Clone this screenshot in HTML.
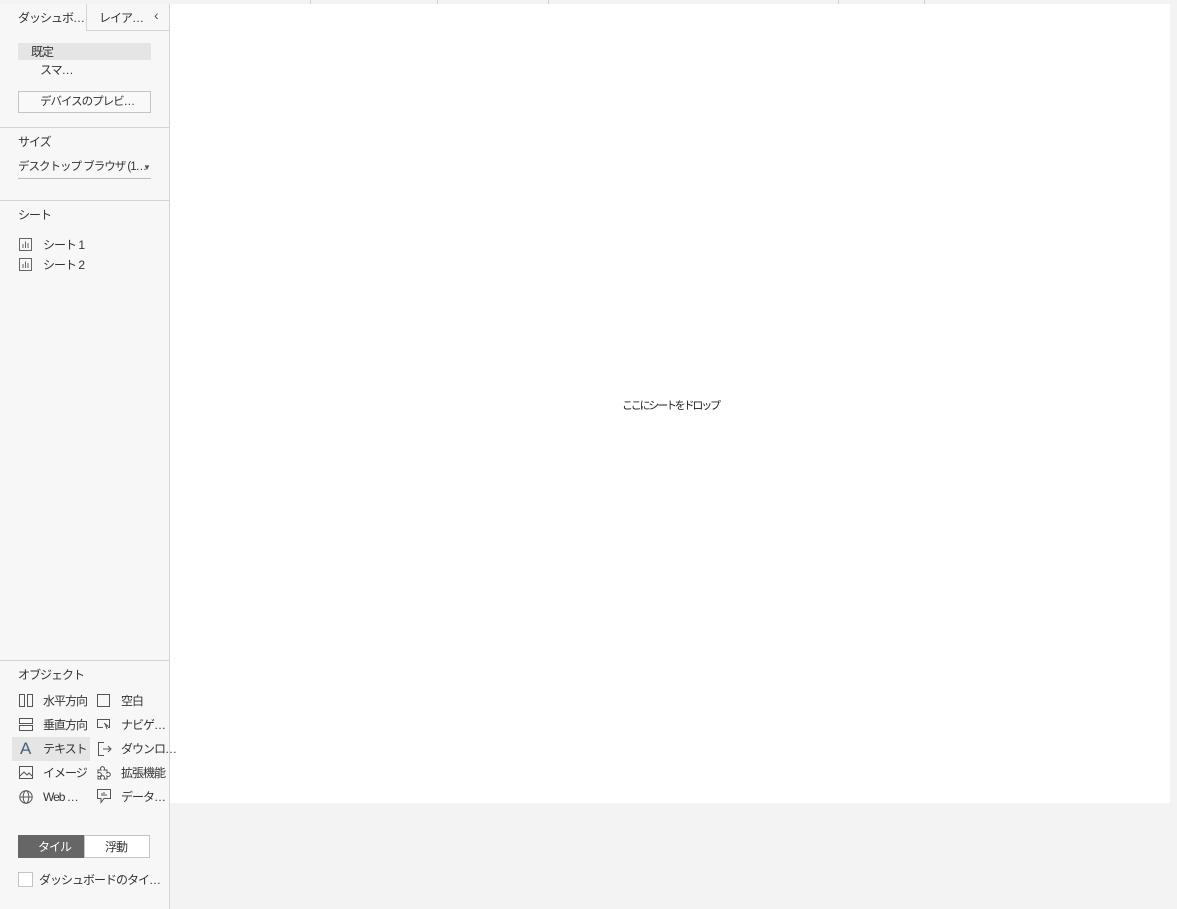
<!DOCTYPE html>
<html><head><meta charset="utf-8"><style>
*{margin:0;padding:0;box-sizing:border-box}
body{width:1177px;height:909px;background:#f3f3f3;font-family:"Liberation Sans","Noto Sans CJK JP",sans-serif;font-size:12px;color:#333;position:relative;overflow:hidden}
.a{position:absolute}
#side{left:0;top:4px;width:170px;height:905px;background:#f7f7f7;border-right:1px solid #d4d4d4}
.t{position:absolute;white-space:nowrap;letter-spacing:-1px;line-height:14px}
.hr{position:absolute;left:0;width:169px;height:1px;background:#d4d4d4}
.tick{position:absolute;top:0;width:1px;height:4px;background:#d0d0d0}
svg{position:absolute}
</style></head><body>
<div class="tick" style="left:310px"></div><div class="tick" style="left:437px"></div><div class="tick" style="left:548px"></div><div class="tick" style="left:838px"></div><div class="tick" style="left:924px"></div>
<div class="a" style="left:170px;top:4px;width:1000px;height:799px;background:#fff"></div>
<div class="t" style="left:622px;top:399px;font-size:11px;color:#222;letter-spacing:-2.2px">ここにシートをドロップ</div>
<div class="a" id="side"></div>
<div class="a" style="left:86px;top:4px;width:84px;height:27px;border-left:1px solid #d4d4d4;border-bottom:1px solid #d4d4d4"></div>
<div class="t" style="left:18px;top:11px">ダッシュボ…</div>
<div class="t" style="left:99px;top:11px">レイア…</div>
<div class="t" style="left:154px;top:8px;font-size:14px;color:#555">‹</div>
<div class="a" style="left:18px;top:43px;width:133px;height:17px;background:#e5e5e5"></div>
<div class="t" style="left:31px;top:45px">既定</div>
<div class="t" style="left:40px;top:63px">スマ…</div>
<div class="a" style="left:18px;top:91px;width:133px;height:22px;border:1px solid #c4c4c4;background:#f9f9f9"></div>
<div class="t" style="left:40px;top:95px;font-size:11.5px">デバイスのプレビ…</div>
<div class="hr" style="top:127px"></div>
<div class="t" style="left:18px;top:135px">サイズ</div>
<div class="t" style="left:18px;top:160px;font-size:11.5px">デスクトップ ブラウザ (1…</div>
<div class="t" style="left:143px;top:161px;font-size:8px;color:#555;letter-spacing:0">▼</div>
<div class="a" style="left:18px;top:178px;width:133px;height:1px;background:#bbb"></div>
<div class="hr" style="top:200px"></div>
<div class="t" style="left:18px;top:208px">シート</div>
<svg style="left:19px;top:238px" width="13" height="13"><rect x=".5" y=".5" width="12" height="12" fill="none" stroke="#666"/><path d="M4 10V6M6.5 10V3.5M9 10V5" stroke="#666"/></svg>
<div class="t" style="left:43px;top:238px">シート 1</div>
<svg style="left:19px;top:258px" width="13" height="13"><rect x=".5" y=".5" width="12" height="12" fill="none" stroke="#666"/><path d="M4 10V6M6.5 10V3.5M9 10V5" stroke="#666"/></svg>
<div class="t" style="left:43px;top:258px">シート 2</div>
<div class="hr" style="top:660px"></div>
<div class="t" style="left:18px;top:668px">オブジェクト</div>
<svg style="left:19px;top:694px" width="14" height="13"><rect x=".5" y=".5" width="5" height="12" fill="none" stroke="#555"/><rect x="8.5" y=".5" width="5" height="12" fill="none" stroke="#555"/></svg>
<div class="t" style="left:43px;top:694px">水平方向</div>
<svg style="left:97px;top:694px" width="13" height="13"><rect x=".5" y=".5" width="12" height="12" fill="none" stroke="#555"/></svg>
<div class="t" style="left:121px;top:694px">空白</div>
<svg style="left:19px;top:718px" width="14" height="13"><rect x=".5" y=".5" width="13" height="5" fill="none" stroke="#555"/><rect x=".5" y="7.5" width="13" height="5" fill="none" stroke="#555"/></svg>
<div class="t" style="left:43px;top:718px">垂直方向</div>
<svg style="left:97px;top:719px" width="14" height="12"><path d="M6 8.5H.5V.5h12v8H11" fill="none" stroke="#555"/><path d="M7 4l4 3-2 .5 1 2.5" fill="#555" stroke="#555"/></svg>
<div class="t" style="left:121px;top:718px">ナビゲ…</div>
<div class="a" style="left:12px;top:737px;width:78px;height:24px;background:#e5e5e5"></div>
<div class="t" style="left:20px;top:740px;font-size:17px;line-height:18px;color:#4a6079;letter-spacing:0">A</div>
<div class="t" style="left:43px;top:742px">テキスト</div>
<svg style="left:98px;top:742px" width="14" height="14"><path d="M6 .5H.5v13H6M5 7h8M10 4l3 3-3 3" fill="none" stroke="#555"/></svg>
<div class="t" style="left:121px;top:742px">ダウンロ…</div>
<svg style="left:19px;top:766px" width="14" height="13"><rect x=".5" y=".5" width="13" height="12" fill="none" stroke="#555"/><path d="M1 10l4-4 3 3 2-2 3 3" fill="none" stroke="#555"/></svg>
<div class="t" style="left:43px;top:766px">イメージ</div>
<svg style="left:97px;top:765px" width="15" height="15"><path d="M1 5h3a2 2 0 1 1 3 0h3v3a2 2 0 1 1 0 3v3H7a2 2 0 1 0-3 0H1v-3a2 2 0 1 0 0-3z" fill="none" stroke="#555"/></svg>
<div class="t" style="left:121px;top:766px">拡張機能</div>
<svg style="left:19px;top:790px" width="14" height="14"><circle cx="7" cy="7" r="6.2" fill="none" stroke="#555"/><ellipse cx="7" cy="7" rx="2.8" ry="6.2" fill="none" stroke="#555"/><path d="M1 7h12" stroke="#555"/></svg>
<div class="t" style="left:43px;top:790px">Web …</div>
<svg style="left:97px;top:789px" width="15" height="15"><path d="M.5.5h13v9H7l-3 4v-4H.5z" fill="none" stroke="#555"/><path d="M5 7V4M7 7V3M9 7V5" stroke="#555"/></svg>
<div class="t" style="left:121px;top:790px">データ…</div>
<div class="a" style="left:18px;top:835px;width:67px;height:23px;background:#666"></div>
<div class="t" style="left:38px;top:840px;color:#fff">タイル</div>
<div class="a" style="left:84px;top:835px;width:66px;height:23px;border:1px solid #c4c4c4;background:#fff"></div>
<div class="t" style="left:105px;top:840px">浮動</div>
<div class="a" style="left:18px;top:872px;width:15px;height:15px;border:1px solid #c4c4c4;background:#fff"></div>
<div class="t" style="left:39px;top:873px">ダッシュボードのタイ…</div>
</body></html>
